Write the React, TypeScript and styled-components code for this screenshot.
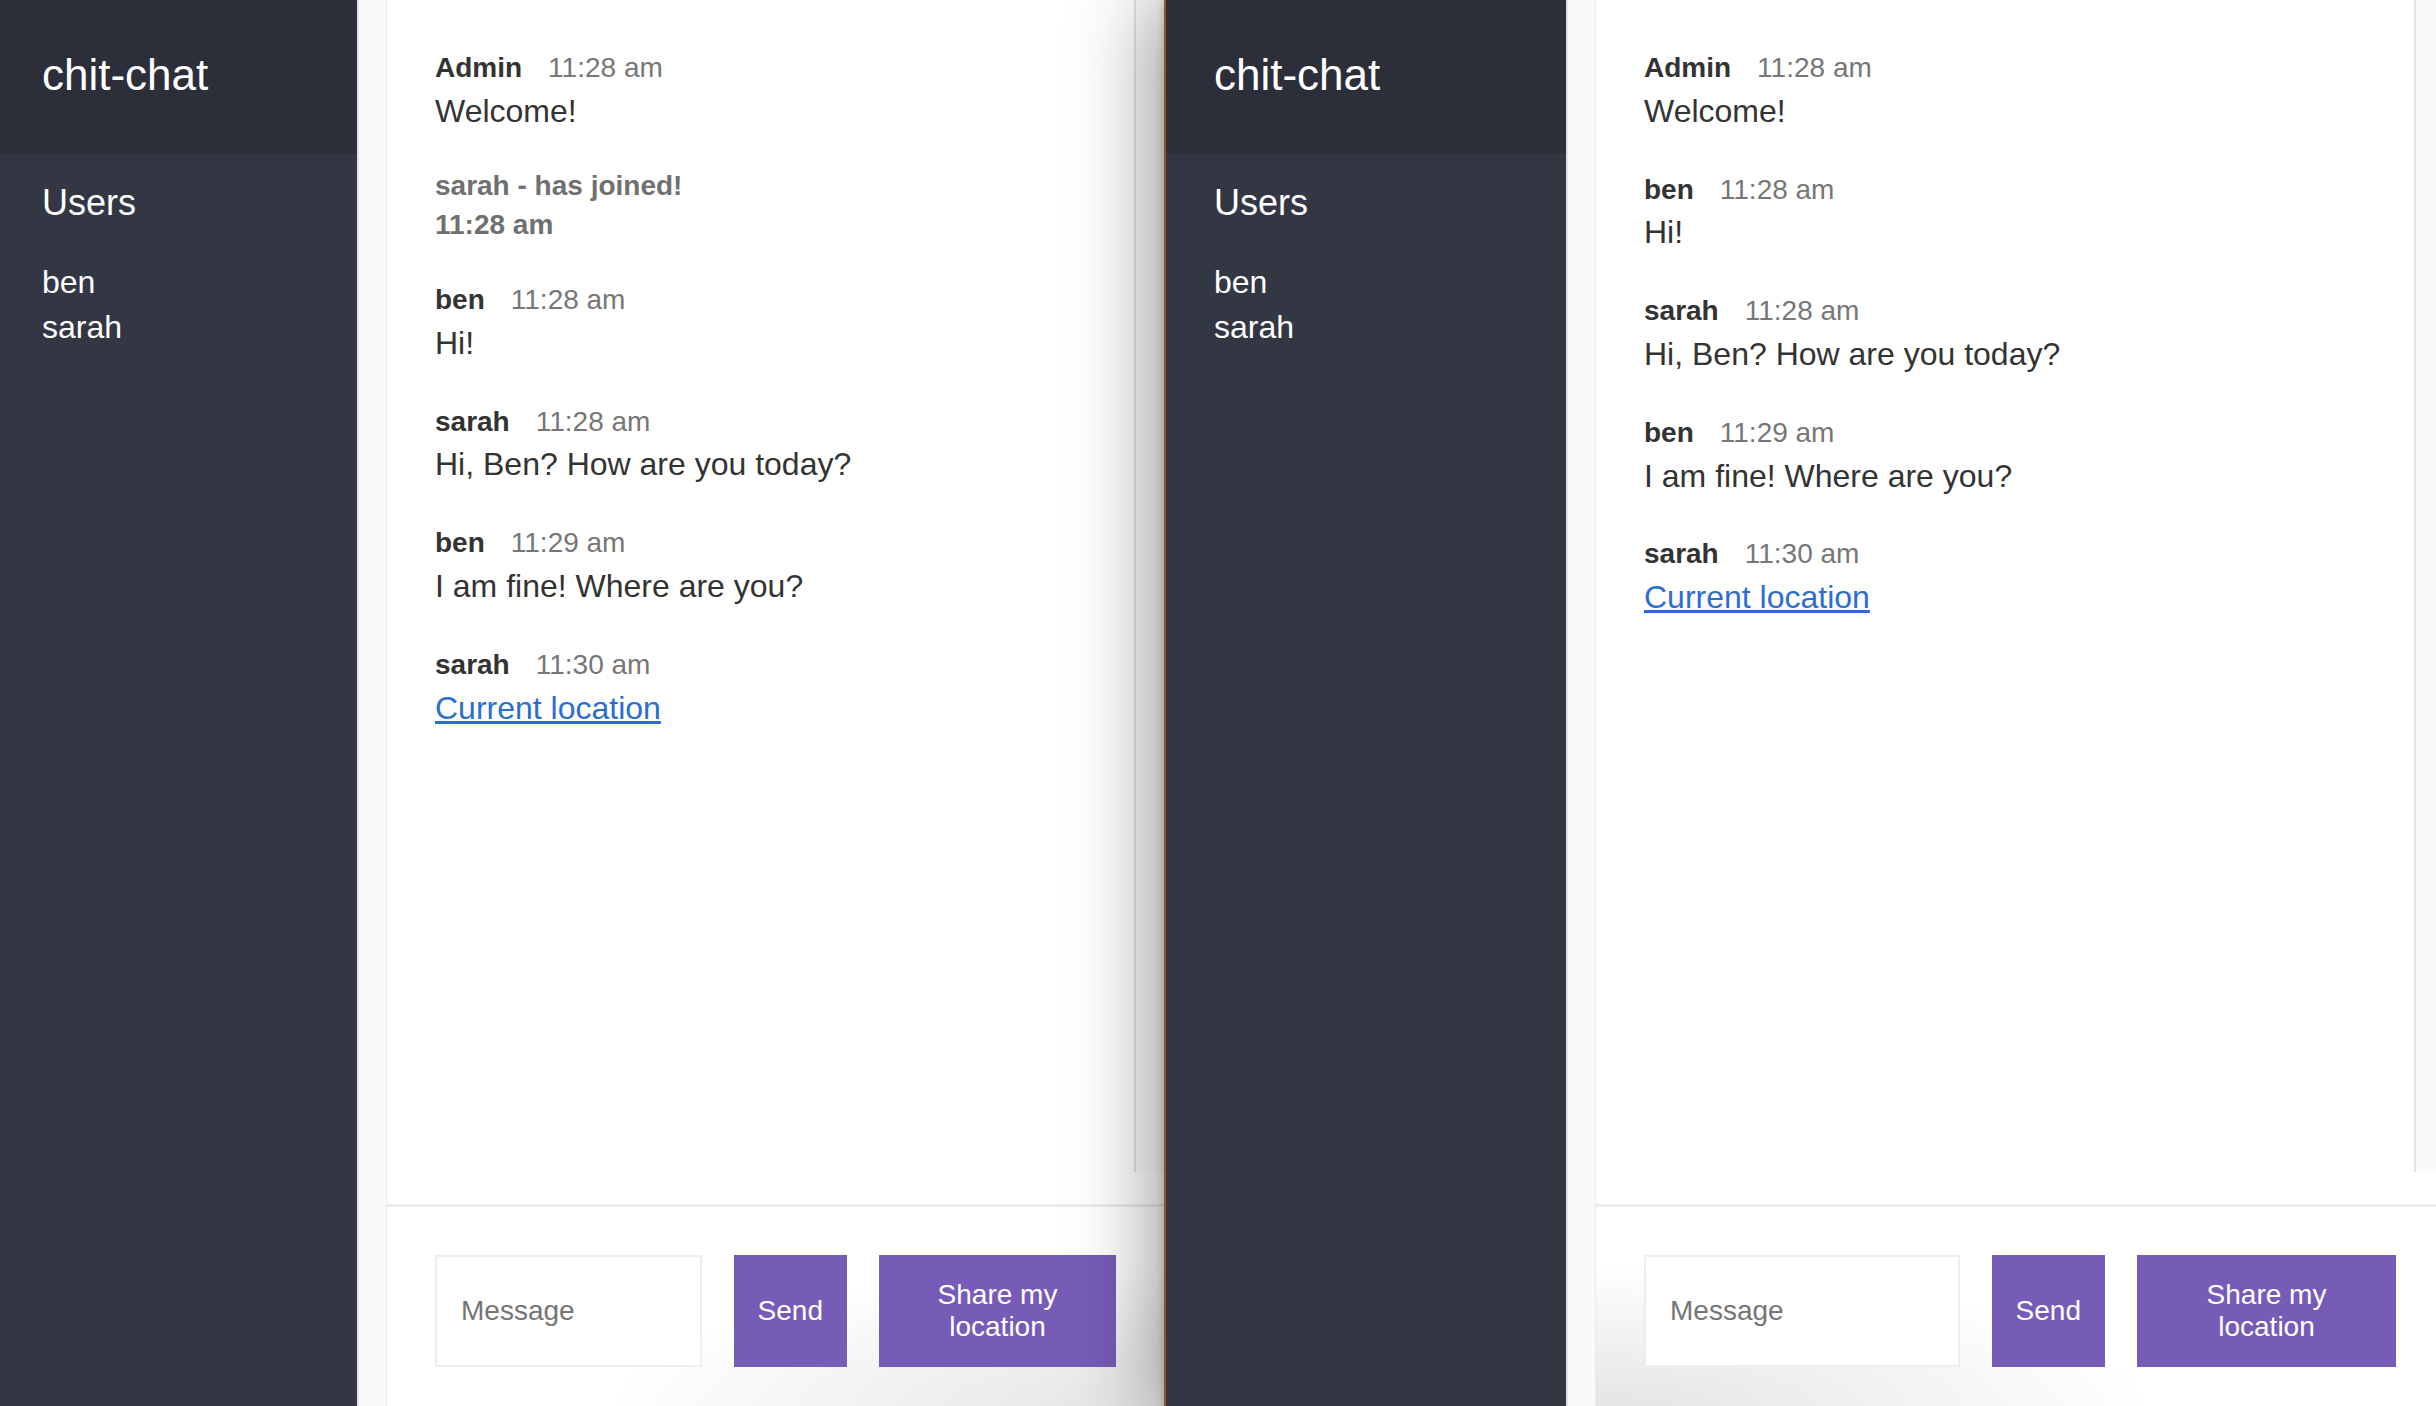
import React from "react";
import styled, { createGlobalStyle, css } from "styled-components";

type ChatMessage =
  | { kind: "text"; name: string; time: string; text: string }
  | { kind: "location"; name: string; time: string; url: string }
  | { kind: "joined"; name: string; time: string };

type Shade = "left" | "right";

const GlobalStyle = createGlobalStyle`
  * {
    margin: 0;
    padding: 0;
    box-sizing: border-box;
  }

  html, body {
    height: 100%;
    overflow: hidden;
    background: #93541f;
  }

  body {
    font-family: "Liberation Sans", Helvetica, Arial, sans-serif;
    font-size: 32px;
    line-height: 1.4;
    color: #333333;
  }
`;

const Desktop = styled.div`
  display: flex;
  height: 1406px;
  overflow: hidden;
`;

const Window = styled.div<{ $width: number; $offset?: number; $front?: boolean }>`
  display: flex;
  flex-shrink: 0;
  width: ${(p) => p.$width}px;
  height: 1415px;
  margin-left: ${(p) => p.$offset ?? 0}px;
  background: #ffffff;

  ${(p) =>
    p.$front &&
    css`
      position: relative;
      z-index: 1;
      border-left: 2px solid #93541f;
      box-shadow: -10px 0 80px rgba(0, 0, 0, 0.4), -1px 0 8px rgba(0, 0, 0, 0.16);
    `}
`;

const Sidebar = styled.aside<{ $width: number }>`
  flex-shrink: 0;
  width: ${(p) => p.$width}px;
  background: #333744;
  color: #ffffff;
`;

const RoomTitle = styled.h2`
  font-weight: 400;
  font-size: 44px;
  background: #2c2f3a;
  padding: 44px 48px 48px 48px;
`;

const ListTitle = styled.h3`
  font-weight: 500;
  font-size: 36px;
  margin-bottom: 8px;
  padding: 24px 48px 0 48px;
`;

const UserList = styled.ul`
  list-style-type: none;
  font-weight: 300;
  padding: 24px 48px 0 48px;
`;

const ScrollTrack = styled.div<{ $edge?: boolean }>`
  flex-shrink: 0;
  width: 30px;
  background: #fafafa;
  border-left: 2px solid #e3e3e3;
  ${(p) => p.$edge && "border-right: 1px solid #ececec;"}
`;

const Main = styled.main`
  flex: 1;
  min-width: 0;
  display: flex;
  flex-direction: column;
`;

const Feed = styled.div`
  flex: 1;
  min-height: 0;
  display: flex;
`;

const Messages = styled.div`
  flex: 1;
  padding: 44px 48px 0 48px;
`;

const MessageBlock = styled.div`
  margin-bottom: 32px;
`;

const Name = styled.span`
  font-weight: 700;
  font-size: 28px;
  margin-right: 26px;
`;

const Meta = styled.span`
  color: #777777;
  font-size: 28px;
`;

const Notice = styled.p`
  color: #707070;
  font-size: 28px;
  font-weight: 700;
`;

const NoticeTime = styled.span`
  display: block;
`;

const LocationLink = styled.a`
  color: #2c6ecf;
`;

const Compose = styled.div<{ $shade: Shade }>`
  display: flex;
  flex-shrink: 0;
  margin-top: 32px;
  border-top: 3px solid #ececec;
  padding: 48px;
  background: radial-gradient(
      ellipse 560px 150px at ${(p) => (p.$shade === "left" ? "0%" : "100%")} 100%,
      rgba(0, 0, 0, 0.11),
      rgba(0, 0, 0, 0) 100%
    ),
    #ffffff;
`;

const ComposeForm = styled.form`
  display: flex;
  flex: 1;
  min-width: 0;
  margin-right: 32px;
`;

const MessageInput = styled.input`
  flex: 1;
  min-width: 0;
  border: 2px solid #eeeeee;
  padding: 24px;
  margin-right: 32px;
  background: #ffffff;
  font-family: inherit;
  font-size: 28px;
  color: #333333;
  outline: none;

  &::placeholder {
    color: #757575;
  }
`;

const Button = styled.button<{ $width?: number }>`
  padding: 24px;
  background: #775cb7;
  border: none;
  color: #ffffff;
  font-family: inherit;
  font-size: 28px;
  line-height: 1.15;
  cursor: pointer;
  ${(p) => p.$width && `flex: 0 0 ${p.$width}px;`}
`;

const users = ["ben", "sarah"];

const conversation: ChatMessage[] = [
  { kind: "text", name: "Admin", time: "11:28 am", text: "Welcome!" },
  { kind: "text", name: "ben", time: "11:28 am", text: "Hi!" },
  { kind: "text", name: "sarah", time: "11:28 am", text: "Hi, Ben? How are you today?" },
  { kind: "text", name: "ben", time: "11:29 am", text: "I am fine! Where are you?" },
  { kind: "location", name: "sarah", time: "11:30 am", url: "https://google.com/maps?q=0,0" },
];

// ben was in the room first, so he also sees sarah arrive
const bensView: ChatMessage[] = [
  conversation[0],
  { kind: "joined", name: "sarah", time: "11:28 am" },
  ...conversation.slice(1),
];

const MessageItem: React.FC<{ message: ChatMessage }> = ({ message }) => {
  if (message.kind === "joined") {
    return (
      <MessageBlock>
        <Notice>
          {message.name} - has joined!
          <NoticeTime>{message.time}</NoticeTime>
        </Notice>
      </MessageBlock>
    );
  }
  return (
    <MessageBlock>
      <p>
        <Name>{message.name}</Name>
        <Meta>{message.time}</Meta>
      </p>
      {message.kind === "text" ? (
        <p>{message.text}</p>
      ) : (
        <p>
          <LocationLink href={message.url} target="_blank">
            Current location
          </LocationLink>
        </p>
      )}
    </MessageBlock>
  );
};

const ChatWindow: React.FC<{
  messages: ChatMessage[];
  width: number;
  sidebarWidth: number;
  shareWidth: number;
  shade: Shade;
  offset?: number;
  front?: boolean;
}> = ({ messages, width, sidebarWidth, shareWidth, shade, offset, front }) => {
  return (
    <Window $width={width} $offset={offset} $front={front}>
      <Sidebar $width={sidebarWidth}>
        <RoomTitle>chit-chat</RoomTitle>
        <ListTitle>Users</ListTitle>
        <UserList>
          {users.map((u) => (
            <li key={u}>{u}</li>
          ))}
        </UserList>
      </Sidebar>
      <ScrollTrack $edge />
      <Main>
        <Feed>
          <Messages>
            {messages.map((m, i) => (
              <MessageItem key={"msg" + i} message={m} />
            ))}
          </Messages>
          <ScrollTrack />
        </Feed>
        <Compose $shade={shade}>
          <ComposeForm onSubmit={(e) => e.preventDefault()}>
            <MessageInput placeholder="Message" autoComplete="off" />
            <Button type="submit">Send</Button>
          </ComposeForm>
          <Button type="button" $width={shareWidth}>
            Share my location
          </Button>
        </Compose>
      </Main>
    </Window>
  );
};

const App: React.FC = () => {
  return (
    <>
      <GlobalStyle />
      <Desktop>
        <ChatWindow
          messages={bensView}
          width={1170}
          sidebarWidth={363}
          shareWidth={237}
          shade="right"
          offset={-6}
        />
        <ChatWindow
          messages={conversation}
          width={1280}
          sidebarWidth={400}
          shareWidth={259}
          shade="left"
          front
        />
      </Desktop>
    </>
  );
};

export default App;
